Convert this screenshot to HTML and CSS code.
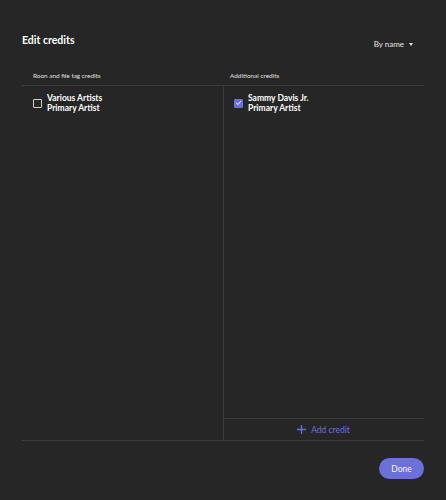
FILE: index.html
```html
<!DOCTYPE html>
<html>
<head>
<meta charset="utf-8">
<link rel="stylesheet" href="styles.css">
</head>
<body>
<div class="dialog">
  <div class="top">
    <h1 class="title">Edit credits</h1>
    <div class="sort">By name <span class="caret"></span></div>
  </div>
  <div class="heads">
    <div class="head head-left">Roon and file tag credits</div>
    <div class="head head-right">Additional credits</div>
  </div>
  <div class="cols">
    <div class="col col-left">
      <div class="credit">
        <span class="check"></span>
        <div class="credit-text">
          <div class="name">Various Artists</div>
          <div class="role">Primary Artist</div>
        </div>
      </div>
    </div>
    <div class="col col-right">
      <div class="list">
        <div class="credit">
          <span class="check checked"><svg viewBox="0 0 10 10" width="8" height="8"><path d="M2 5.2 L4.2 7.3 L8 2.8" fill="none" stroke="#fff" stroke-width="1.4" stroke-linecap="round" stroke-linejoin="round"/></svg></span>
          <div class="credit-text">
            <div class="name">Sammy Davis Jr.</div>
            <div class="role">Primary Artist</div>
          </div>
        </div>
      </div>
      <div class="add"><svg class="plus" viewBox="0 0 9 9" width="9" height="9"><path d="M4.5 0 V9 M0 4.5 H9" stroke="#6d70d8" stroke-width="1.3"/></svg><span>Add credit</span></div>
    </div>
  </div>
  <div class="footer">
    <button class="done">Done</button>
  </div>
</div>
</body>
</html>
```
FILE: styles.css
```css
html, body {
  margin: 0;
  padding: 0;
  background: #262626;
}
body {
  font-family: Lato, "Open Sans", sans-serif;
  color: #fff;
  width: 446px;
  height: 500px;
  overflow: hidden;
}
.dialog {
  padding: 0 22px;
}
.top {
  display: flex;
  justify-content: space-between;
  align-items: flex-start;
  height: 70px;
}
.title {
  margin: 33px 0 0;
  font-size: 10.5px;
  font-weight: 700;
  line-height: 14px;
}
.sort {
  margin-top: 38px;
  margin-right: 11px;
  font-size: 8px;
  line-height: 12px;
  color: #e6e6e6;
  display: flex;
  align-items: center;
}
.caret {
  display: inline-block;
  margin-left: 5px;
  width: 0;
  height: 0;
  border-left: 2.5px solid transparent;
  border-right: 2.5px solid transparent;
  border-top: 3px solid #e6e6e6;
}
.heads {
  display: grid;
  grid-template-columns: 201px 201px;
  height: 15px;
  border-bottom: 1px solid #3c3c3c;
}
.head {
  font-size: 6.4px;
  line-height: 12px;
  color: #e0e0e0;
}
.head-left { padding-left: 11px; }
.head-right { padding-left: 7px; }
.cols {
  display: grid;
  grid-template-columns: 201px 201px;
  height: 354px;
  border-bottom: 1px solid #3c3c3c;
}
.col-right {
  border-left: 1px solid #3c3c3c;
  display: flex;
  flex-direction: column;
}
.list {
  flex: 1;
}
.credit {
  display: flex;
  align-items: center;
  gap: 5px;
  padding: 7px 0 0 11px;
}
.col-right .credit {
  padding-left: 10px;
}
.check {
  width: 7px;
  height: 7px;
  border: 1px solid #d0d0d0;
  border-radius: 1px;
  display: flex;
  align-items: center;
  justify-content: center;
}
.check.checked {
  background: #6d70d8;
  border-color: #6d70d8;
}
.name, .role {
  font-size: 8.5px;
  line-height: 10px;
  font-weight: 700;
}
.add {
  height: 21px;
  border-top: 1px solid #3c3c3c;
  display: flex;
  align-items: center;
  justify-content: center;
  gap: 5px;
  font-size: 8.5px;
  color: #6d70d8;
  padding-right: 1px;
}
.plus {
  display: block;
}
.footer {
  display: flex;
  justify-content: flex-end;
  padding-top: 17px;
}
.done {
  width: 45px;
  height: 21px;
  border: none;
  border-radius: 11px;
  background: #6d70d8;
  color: #f4f4ff;
  font-family: Lato, sans-serif;
  font-size: 8.5px;
  padding: 0;
}
```
